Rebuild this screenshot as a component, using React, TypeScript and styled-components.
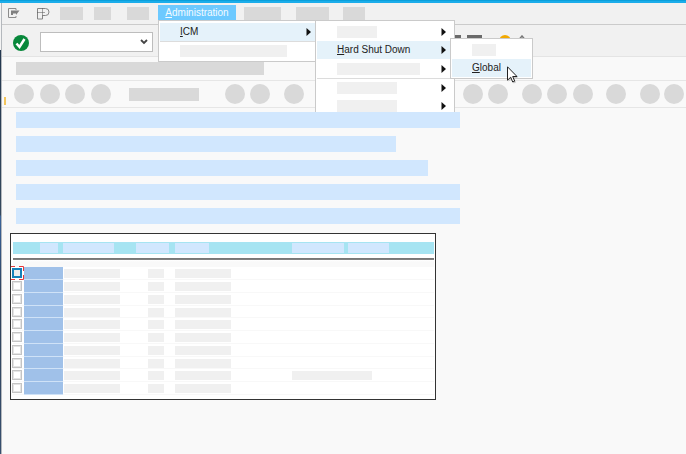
import React from "react";
import styled, { createGlobalStyle } from "styled-components";

const GlobalStyle = createGlobalStyle`
  * { box-sizing: border-box; }
  body {
    margin: 0;
    background: #f9f9f9;
    font-family: "Liberation Sans", Arial, sans-serif;
    font-size: 10px;
    line-height: 16px;
    color: #222;
    overflow-x: hidden;
  }
  button { font: inherit; color: inherit; border: 0; background: none; padding: 0; margin: 0; }
  u { text-underline-offset: 1px; }
`;

const Page = styled.div`
  display: grid;
  grid-template-columns: 2px minmax(0, 1fr);
  min-height: 100vh;
  overflow: hidden;
`;

const Edge = styled.div`
  border-right: 1px solid #b4b8bd;
  background: linear-gradient(#f4f4f4 50px, #24384f 50px, #34485d 215px, #3c6499 216px, #35598a 240px, #2f415a 300px, #37506f);
`;

const Window = styled.div`
  min-width: 0;
`;

const TopEdge = styled.div`
  height: 3px;
  margin-left: -2px;
  position: relative;
  background: linear-gradient(#0aa0dc 1px, #1badea 1px);
`;

const MenuBar = styled.nav`
  display: flex;
  height: 22px;
  padding: 2px 0 0 6px;
  background: #f1f1f1;
  border-bottom: 1px solid #cbcbcb;
`;

const BarItem = styled.button<{ $gap?: number }>`
  display: flex;
  flex: none;
  align-items: center;
  height: 16px;
  margin-left: ${(p) => p.$gap ?? 0}px;
`;

const MenuAnchor = styled.div`
  position: relative;
  flex: none;
  margin-left: 9px;
`;

const OpenMenu = styled.button`
  width: 78px;
  height: 16px;
  background: #6cc9ff;
  color: #f4fbff;
  text-align: center;
`;

const Block = styled.span<{ $w: number; $h?: number; $gap?: number; $tone?: string }>`
  display: block;
  flex: none;
  width: ${(p) => p.$w}px;
  height: ${(p) => p.$h ?? 13}px;
  margin-left: ${(p) => p.$gap ?? 0}px;
  background: ${(p) => p.$tone ?? "#d9d9d9"};
`;

const Popup = styled.div<{ $x: number; $y: number; $w: number }>`
  position: absolute;
  left: ${(p) => p.$x}px;
  top: ${(p) => p.$y}px;
  width: ${(p) => p.$w}px;
  padding: 2px 1px 1px;
  background: #fff;
  border: 1px solid #cacaca;
  z-index: 2;
`;

const MenuRow = styled.button<{ $active?: boolean; $ruled?: boolean; $h?: number; $end?: number }>`
  display: flex;
  align-items: center;
  justify-content: space-between;
  width: 100%;
  height: ${(p) => p.$h ?? 18}px;
  padding: 0 ${(p) => p.$end ?? 7}px 0 20px;
  background: ${(p) => (p.$active ? "#e5f2fa" : "#fff")};
  border-bottom: ${(p) => (p.$ruled ? "1px solid #dcdcdc" : "0")};
  white-space: nowrap;
`;

const CommandBar = styled.div`
  display: flex;
  align-items: flex-start;
  height: 32px;
  padding: 7px 0 0 11px;
  background: #f1f1f1;
  border-bottom: 1px solid #e4e4e4;
`;

const Confirm = styled.button`
  display: flex;
  width: 16px;
  height: 16px;
  margin-top: 3px;
`;

const Combo = styled.span`
  position: relative;
  flex: none;
  margin-left: 11px;
  svg {
    position: absolute;
    right: 5px;
    top: 7px;
    pointer-events: none;
  }
`;

const ComboField = styled.select`
  appearance: none;
  display: block;
  width: 113px;
  height: 20px;
  background: #fff;
  border: 1px solid #bdbdbd;
  border-radius: 0;
  font: inherit;
`;

const ToolPeek = styled.span<{ $gap: number }>`
  display: flex;
  flex: none;
  margin: 3px 0 0 ${(p) => p.$gap}px;
`;

const TitleStrip = styled.header`
  height: 24px;
  padding: 5px 0 0 14px;
  border-bottom: 1px solid #e6e6e6;
`;

const ActionBar = styled.div`
  display: flex;
  align-items: center;
  height: 27px;
  padding-left: 2px;
  border-bottom: 1px solid #e6e6e6;
`;

const RoundTool = styled.button<{ $gap: number }>`
  flex: none;
  width: 20px;
  height: 20px;
  margin-left: ${(p) => p.$gap}px;
  border-radius: 50%;
  background: #d9d9d9;
`;

const Content = styled.main`
  position: relative;
  z-index: 3;
  padding: 4px 14px 0;
`;

const Lines = styled.div`
  display: flex;
  flex-direction: column;
  gap: 8px;
`;

const Grid = styled.section`
  width: 426px;
  max-width: 100%;
  margin: 9px 0 0 -6px;
  padding: 8px 1px 4px 2px;
  background: #fff;
  border: 1px solid #333;
  overflow: hidden;
`;

const List = styled.table`
  width: 100%;
  table-layout: fixed;
  border-spacing: 0;
  td, th { padding: 0; vertical-align: top; }
`;

const HeadCell = styled.th`
  height: 12px;
  background: #a6e4f2;
  border-top: 1px solid #a6e4f2;
`;

const RuleCell = styled.td`
  height: 13px;
  background: linear-gradient(#fff 4px, #777 4px, #777 5px, #888 6px, #fff 6px, #f9f9f9 8px, #f9f9f9 13px);
`;

const Row = styled.tr<{ $short?: boolean }>`
  height: ${(p) => (p.$short ? 12 : 13)}px;
`;

const Cell = styled.td<{ $marked?: boolean }>`
  border-bottom: 1px solid ${(p) => (p.$marked ? "#cfe2f7" : "#f8f8f8")};
  background: ${(p) => (p.$marked ? "#a0c1e9" : "#fff")};
  ${Block} { margin-top: 2px; }
`;

const Tick = styled.input`
  appearance: none;
  display: block;
  width: 10px;
  height: 10px;
  margin: 1px 0 0 -1px;
  background: #fff;
  border: 1px solid #c4c4c4;
  outline: 1px solid #e4e4e4;
  outline-offset: -2px;
`;

const FocusTick = styled(Tick)`
  border: 2px solid #1681b9;
  background: #ededed;
  outline: 0;
`;

const FocusCell = styled.div`
  position: relative;
  svg {
    position: absolute;
    left: -3px;
    top: -2px;
    pointer-events: none;
  }
`;

const Arrow = () => (
  <svg width="5" height="8" viewBox="0 0 5 8" aria-hidden="true">
    <path d="M0.5 0v8L5 4z" fill="#111" />
  </svg>
);

const Pointer = styled.svg`
  position: absolute;
  left: 56px;
  top: 27px;
  z-index: 1;
`;

const PALE = "#f0f0f0";
const BLUE = "#d1e7fe";

const tools = [
  { gap: 8 }, { gap: 6 }, { gap: 5 }, { gap: 6 }, { gap: 18, wide: true },
  { gap: 26 }, { gap: 5 }, { gap: 14 }, { gap: 159 }, { gap: 5 }, { gap: 14 },
  { gap: 5 }, { gap: 6 }, { gap: 13 }, { gap: 14 }, { gap: 4 },
];

const lineWidths = [444, 380, 412, 444, 444];
const columns = [11, 39, 73, 39, 117, 56, 86];
const heads: Array<[number, number] | null> = [null, [18, 16], [51, 0], [33, 0], [34, 0], [52, 0], [41, 0]];
const rows = Array.from({ length: 10 }, (_, i) => ({ id: i + 1, extra: i === 8, short: i === 3 || i === 7 }));

export default function App() {
  return (
    <>
      <GlobalStyle />
      <Page>
        <Edge />
        <Window>
          <TopEdge />
          <MenuBar>
            <BarItem aria-label="Exit">
              <svg width="12" height="12" viewBox="0 0 12 12">
                <path d="M8 3V1.500H.5V10.500H8V9" fill="none" stroke="#8c8c8c" />
                <path d="M3 3.500H11.500L8 8V6.500H5V8H3z" fill="#808080" />
              </svg>
            </BarItem>
            <BarItem $gap={17} aria-label="Session">
              <svg width="13" height="13" viewBox="0 0 13 13" fill="none" stroke="#858585">
                <path d="M.5 1.500H8.500Q12 1.500 12 5T8.500 8.500H5.500V12H.500V1.500" />
                <path d="M5.500 1.500V8.500M.500 5.500H8" stroke="#555" strokeDasharray="1 1" />
              </svg>
            </BarItem>
            <BarItem $gap={10} aria-label="Menu 1"><Block $w={23} /></BarItem>
            <BarItem $gap={11} aria-label="Menu 2"><Block $w={17} /></BarItem>
            <BarItem $gap={16} aria-label="Menu 3"><Block $w={22} /></BarItem>
            <MenuAnchor>
              <OpenMenu><u>A</u>dministration</OpenMenu>
              <Popup $x={0} $y={15} $w={159}>
                <MenuRow $active $ruled $h={19} $end={4}><span><u>I</u>CM</span><Arrow /></MenuRow>
                <MenuRow><Block $w={107} $h={12} $tone={PALE} /></MenuRow>
              </Popup>
              <Popup $x={157} $y={15} $w={140}>
                <MenuRow><Block $w={40} $h={12} $tone={PALE} /><Arrow /></MenuRow>
                <MenuRow $active><span><u>H</u>ard Shut Down</span><Arrow /></MenuRow>
                <MenuRow $ruled $h={20}><Block $w={83} $h={12} $tone={PALE} /><Arrow /></MenuRow>
                <MenuRow><Block $w={60} $h={12} $tone={PALE} /><Arrow /></MenuRow>
                <MenuRow><Block $w={60} $h={12} $tone={PALE} /><Arrow /></MenuRow>
              </Popup>
              <Popup $x={292} $y={33} $w={83}>
                <MenuRow><Block $w={24} $h={12} $tone={PALE} /></MenuRow>
                <MenuRow $active><span><u>G</u>lobal</span></MenuRow>
                <Pointer width="12" height="18" viewBox="0 0 12 18">
                  <path d="M1.500 2.500v13l3-2.500 2.200 4.500 2.300-1-2-4.500H11z" fill="#aaa" opacity=".6" />
                  <path d="M.5 .8v13.400l3.200-3 2 4.800 2-.9-2-4.600H10z" fill="#fff" stroke="#222" />
                </Pointer>
              </Popup>
            </MenuAnchor>
            <BarItem $gap={8} aria-label="Menu 5"><Block $w={37} /></BarItem>
            <BarItem $gap={15} aria-label="Menu 6"><Block $w={33} /></BarItem>
            <BarItem $gap={14} aria-label="Menu 7"><Block $w={22} /></BarItem>
          </MenuBar>
          <CommandBar>
            <Confirm aria-label="Enter">
              <svg width="16" height="16" viewBox="0 0 16 16">
                <circle cx="8" cy="8" r="8" fill="#08883b" />
                <path d="M3.500 8.500L6.500 12L11.500 4" fill="none" stroke="#fff" strokeWidth="2.500" />
              </svg>
            </Confirm>
            <Combo>
              <ComboField aria-label="Command"><option /></ComboField>
              <svg width="8" height="6" viewBox="0 0 8 6">
                <path d="M1 1l3 3 3-3" fill="none" stroke="#444" strokeWidth="1.800" />
              </svg>
            </Combo>
            <ToolPeek $gap={301}><Block $w={7} $h={3} $tone="#6a6a6a" /></ToolPeek>
            <ToolPeek $gap={6}><Block $w={15} $h={3} $tone="#6a6a6a" /></ToolPeek>
            <ToolPeek $gap={17}>
              <svg width="12" height="12" viewBox="0 0 12 12"><circle cx="6" cy="6" r="6" fill="#f2a900" /></svg>
            </ToolPeek>
            <ToolPeek $gap={7}>
              <svg width="10" height="10" viewBox="0 0 10 10" fill="none" stroke="#777" strokeWidth="1.500">
                <path d="M1.500 4L4 1l2.500 3M8 8l1 1" />
              </svg>
            </ToolPeek>
          </CommandBar>
          <TitleStrip><Block $w={248} /></TitleStrip>
          <ActionBar>
            <svg width="2" height="22" viewBox="0 0 2 22">
              <path d="M1 14v8" stroke="#f3c55c" strokeWidth="2" />
            </svg>
            {tools.map((t, i) =>
              t.wide ? <Block key={i} $w={70} $gap={t.gap} /> : <RoundTool key={i} $gap={t.gap} aria-label={`Tool ${i + 1}`} />
            )}
          </ActionBar>
          <Content>
            <Lines>
              {lineWidths.map((w, i) => <Block key={i} $w={w} $h={16} $tone={BLUE} />)}
            </Lines>
            <Grid>
              <List>
                <colgroup>{columns.map((w, i) => <col key={i} width={w} />)}</colgroup>
                <thead>
                  <tr>
                    {heads.map((h, i) => (
                      <HeadCell key={i}>{h && <Block $w={h[0]} $h={10} $gap={h[1]} $tone={BLUE} />}</HeadCell>
                    ))}
                  </tr>
                </thead>
                <tbody>
                  <tr><RuleCell colSpan={7} /></tr>
                  {rows.map((r) => (
                    <Row key={r.id} $short={r.short}>
                      <Cell>
                        {r.id === 1 ? (
                          <FocusCell>
                            <FocusTick type="checkbox" aria-label="Row 1" />
                            <svg width="14" height="14" viewBox="0 0 14 14" fill="none" stroke="#e8383b">
                              <path d="M.5 5V.5H5M9 .5h4.500V5M13.500 9v4.500H9M5 13.500H.5V9" />
                            </svg>
                          </FocusCell>
                        ) : (
                          <Tick type="checkbox" aria-label={`Row ${r.id}`} />
                        )}
                      </Cell>
                      <Cell $marked />
                      <Cell><Block $w={56} $h={9} $gap={1} $tone={PALE} /></Cell>
                      <Cell><Block $w={16} $h={9} $gap={12} $tone={PALE} /></Cell>
                      <Cell><Block $w={56} $h={9} $tone={PALE} /></Cell>
                      <Cell colSpan={2}>{r.extra && <Block $w={80} $h={9} $tone={PALE} />}</Cell>
                    </Row>
                  ))}
                </tbody>
              </List>
            </Grid>
          </Content>
        </Window>
      </Page>
    </>
  );
}
